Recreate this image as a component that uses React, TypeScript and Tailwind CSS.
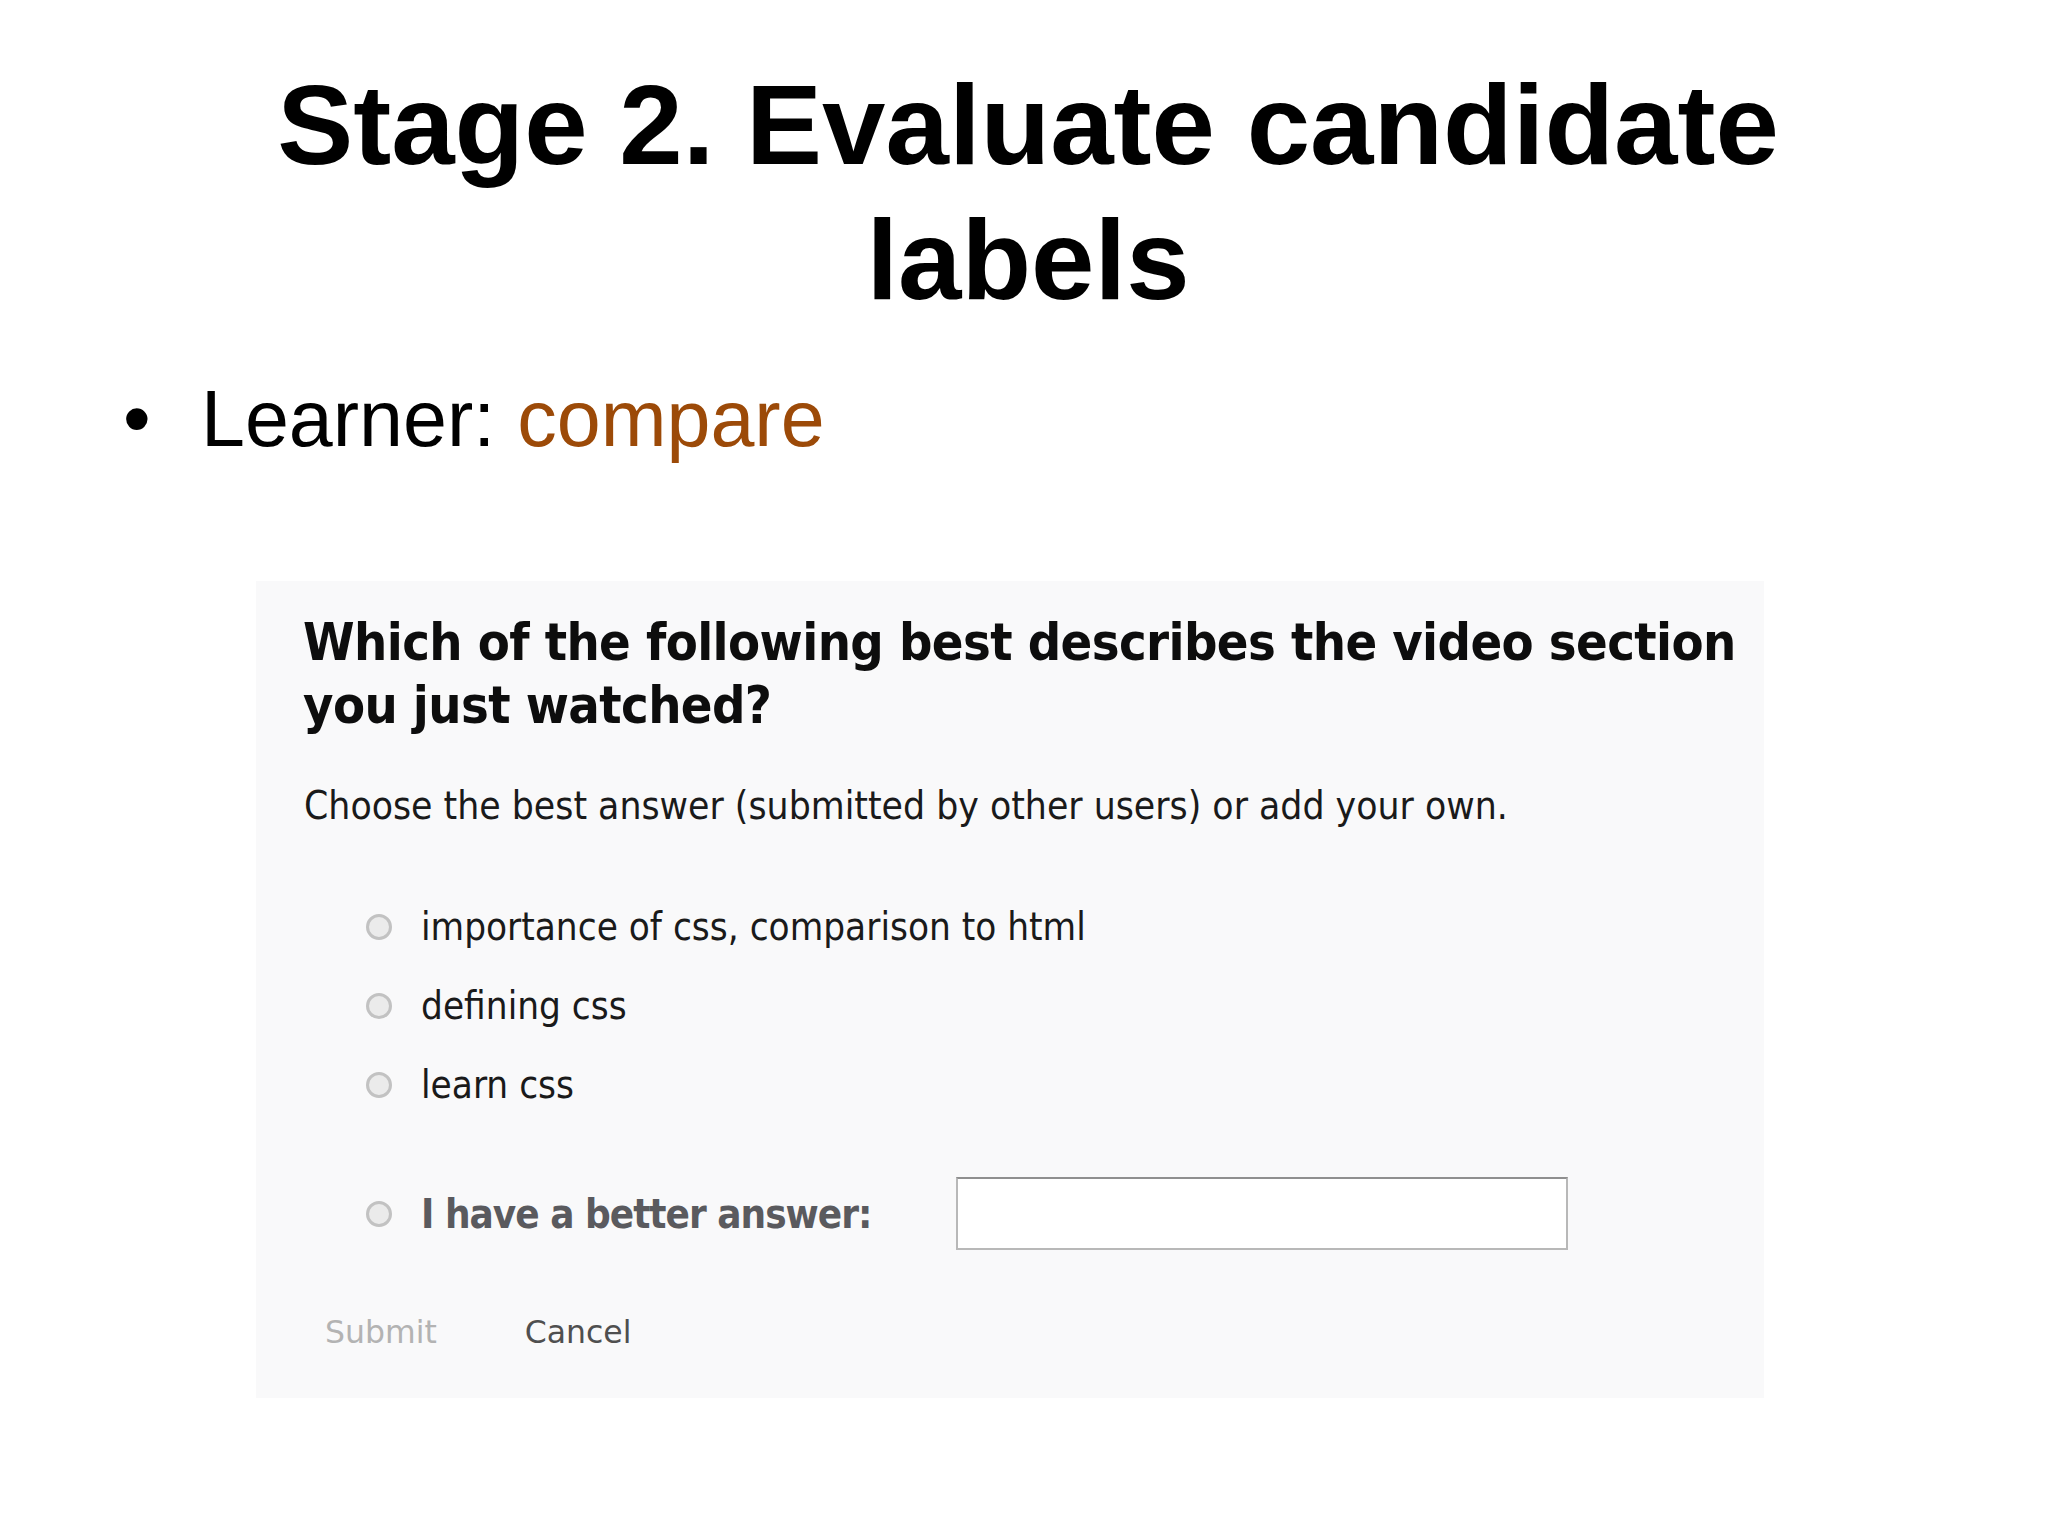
import React from 'react';

const options = [
    'importance of css, comparison to html',
    'defining css',
    'learn css',
];

const Radio = () => (
    <span className="block w-[26px] h-[26px] shrink-0 rounded-full border-[3px] border-[#c2c2c2] bg-[#ebebeb]" />
);

export default function App() {
    return (
        <div className="w-[2048px] h-[1536px] bg-white overflow-hidden font-['Liberation_Sans',Arial,sans-serif] text-black">
            <h1 className="mt-[57px] pl-[8px] text-center text-[114px] leading-[135px] font-bold">
                Stage 2. Evaluate candidate
                <br />
                labels
            </h1>

            <div className="mt-[46px] flex text-[79px] leading-[92px]">
                <span className="pl-[123px] w-[201px]">•</span>
                <span>
                    Learner: <span className="text-[#9c4a08]">compare</span>
                </span>
            </div>

            <div className="mt-[116px] ml-[256px] w-[1508px] h-[817px] bg-[#f9f9fa] pt-[30px] pl-[47px] font-['DejaVu_Sans_Condensed','DejaVu_Sans',Tahoma,sans-serif]">
                <h2 className="text-[52px] leading-[63px] font-bold text-[#0d0d0d] whitespace-nowrap tracking-[-0.6px]">
                    Which of the following best describes the video section
                    <br />
                    you just watched?
                </h2>
                <p className="mt-[45px] pl-[1px] text-[38.7px] leading-[48px] text-[#1a1a1a] whitespace-nowrap">
                    Choose the best answer (submitted by other users) or add your own.
                </p>

                <div className="mt-[57px] pl-[63px] flex flex-col">
                    {options.map(opt => (
                        <div key={opt} className="h-[79px] flex items-center gap-[29px]">
                            <Radio />
                            <span className="text-[38.3px] text-[#1a1a1a] whitespace-nowrap">{opt}</span>
                        </div>
                    ))}
                    <div className="mt-[50px] h-[79px] flex items-center gap-[29px]">
                        <Radio />
                        <span className="w-[506px] text-[40px] font-bold text-[#5a5a5e] whitespace-nowrap tracking-[-1px]">
                            I have a better answer:
                        </span>
                        <input
                            type="text"
                            className="w-[612px] h-[73px] bg-white border-2 border-[#b8b8b8] border-t-[#8f8f8f] outline-none"
                        />
                    </div>
                </div>

                <div className="mt-[56px] pl-[22px] flex items-center gap-[88px] font-['DejaVu_Sans',sans-serif] text-[31.5px]">
                    <button type="button" className="text-[#b3b3b3]">Submit</button>
                    <button type="button" className="text-[#4f4f4f]">Cancel</button>
                </div>
            </div>
        </div>
    );
}
